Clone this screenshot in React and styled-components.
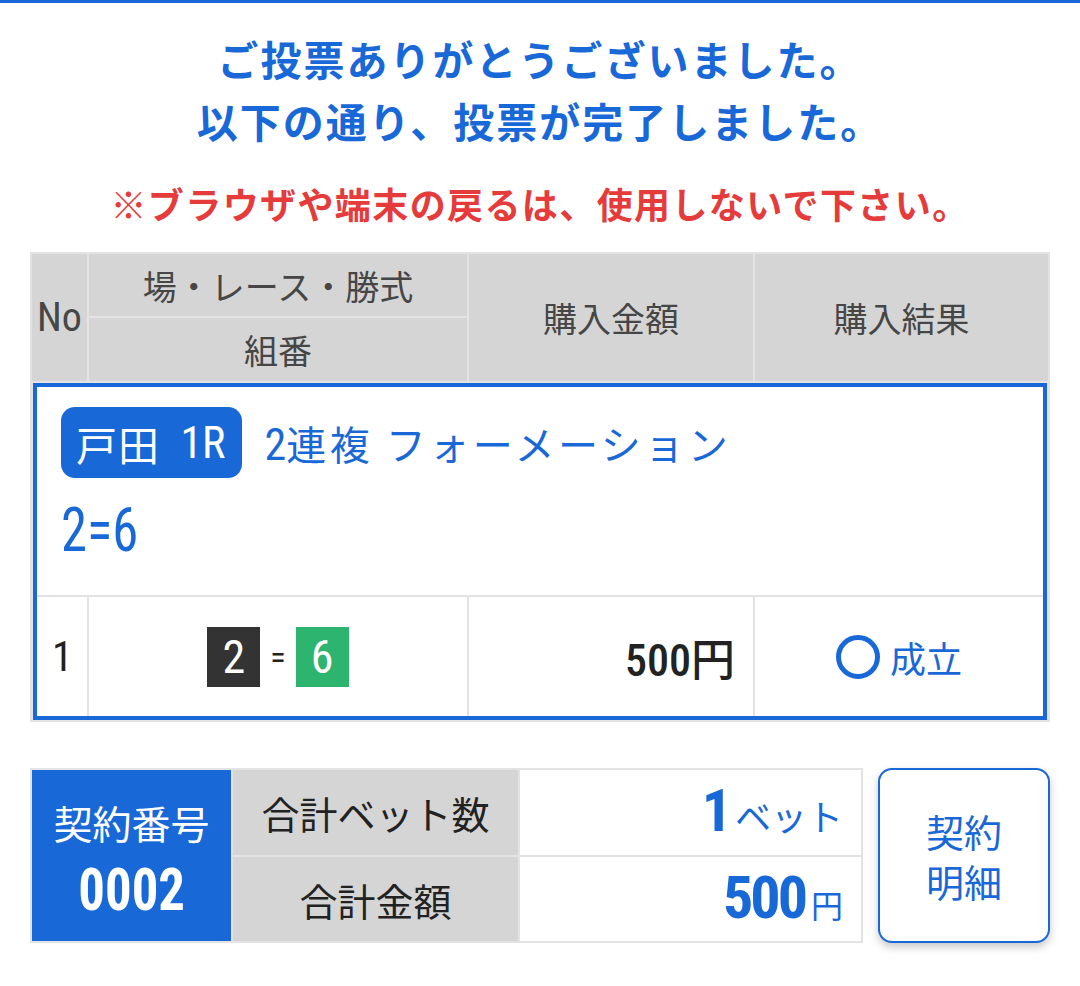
import React from "react";
import styled, { createGlobalStyle } from "styled-components";

const BLUE = "#1968d8";
const RED = "#e53b3b";
const GRID = "#e3e3e3";
const HEAD = "#d5d5d5";
const JP = `"Noto Sans CJK JP", "Noto Sans", sans-serif`;
const NUM = `"Roboto Condensed", "Roboto", "Noto Sans CJK JP", sans-serif`;

const Global = createGlobalStyle`
  html, body { margin: 0; padding: 0; background: #fff; }
  body { font-family: ${JP}; color: #222; }
  * { box-sizing: border-box; }
`;

const TopBar = styled.div`
  height: 3px;
  background: ${BLUE};
`;

const Page = styled.div`
  padding: 24px 30px 40px;
`;

const Title = styled.h1`
  margin: 0;
  text-align: center;
  color: ${BLUE};
  font-size: 41px;
  line-height: 62px;
  font-weight: 700;
  letter-spacing: 2px;
`;

const Warning = styled.p`
  margin: 27px 0 0;
  text-align: center;
  color: ${RED};
  font-size: 36px;
  line-height: 50px;
  font-weight: 700;
  letter-spacing: 1.4px;
`;

const Table = styled.div`
  margin-top: 24px;
  background: ${GRID};
  padding: 2px;
  display: flex;
  flex-direction: column;
  gap: 2px;
`;

const HeadGrid = styled.div`
  display: grid;
  grid-template-columns: 55px 378px 284px 1fr;
  grid-template-rows: 62px 63px;
  gap: 2px;
`;

const HeadCell = styled.div`
  background: ${HEAD};
  color: #464646;
  font-size: ${(p) => (p.$num ? 40 : 34)}px;
  display: flex;
  align-items: center;
  justify-content: center;
  grid-column: ${(p) => p.$col};
  grid-row: ${(p) => p.$row};
  font-family: ${(p) => (p.$num ? NUM : JP)};
  font-stretch: condensed;
`;

const BetBox = styled.div`
  border: 4px solid ${BLUE};
  margin: 0 1px;
  background: ${GRID};
  display: flex;
  flex-direction: column;
  gap: 2px;
`;

const Info = styled.div`
  background: #fff;
  height: 208px;
  padding: 20px 24px 0;
  color: ${BLUE};
`;

const InfoLine = styled.div`
  display: flex;
  align-items: center;
  gap: 22px;
  font-size: 40px;
  letter-spacing: 3.5px;
`;

const Badge = styled.span`
  display: inline-flex;
  align-items: center;
  height: 71px;
  padding: 0 17px 0 15px;
  background: ${BLUE};
  color: #fff;
  border-radius: 14px;
  letter-spacing: 1px;
  font-size: 41px;
`;

const Num = styled.span`
  font-family: ${NUM};
  font-stretch: condensed;
  letter-spacing: 0;
  font-weight: ${(p) => p.$w || 400};
  font-size: ${(p) => (p.$size ? `${p.$size}px` : "inherit")};
`;

const Combo = styled.div`
  margin-top: 16px;
  font-family: ${NUM};
  font-stretch: condensed;
  font-size: 62px;
  line-height: 72px;
  transform: scaleX(0.85);
  transform-origin: left center;
`;

const Row = styled.div`
  display: grid;
  grid-template-columns: 50px 378px 284px 1fr;
  height: 119px;
  gap: 2px;
`;

const Cell = styled.div`
  background: #fff;
  display: flex;
  align-items: center;
  justify-content: ${(p) => p.$align || "center"};
  padding: ${(p) => p.$pad || "0"};
`;

const RowNo = styled.span`
  font-family: ${NUM};
  font-stretch: condensed;
  font-size: 42px;
  color: #222;
`;

const Frame = styled.span`
  width: 53px;
  height: 60px;
  display: inline-flex;
  align-items: center;
  justify-content: center;
  background: ${(p) => p.$bg};
  color: #fff;
  font-family: ${NUM};
  font-stretch: condensed;
  font-size: 46px;
`;

const Eq = styled.span`
  font-family: ${NUM};
  font-size: 32px;
  color: #222;
  margin: 0 10px;
`;

const Amount = styled.span`
  font-size: 44px;
  color: #222;
  font-weight: 500;
`;

const Result = styled.div`
  display: flex;
  align-items: center;
  gap: 10px;
  color: ${BLUE};
  font-size: 36px;
`;

const Ring = styled.span`
  width: 44px;
  height: 44px;
  border: 5px solid ${BLUE};
  border-radius: 50%;
`;

const Summary = styled.div`
  margin-top: 46px;
  display: flex;
  gap: 15px;
  align-items: stretch;
`;

const SumGrid = styled.div`
  flex: 1;
  background: ${GRID};
  padding: 2px;
  display: grid;
  grid-template-columns: 199px 285px 1fr;
  grid-template-rows: 85px 84px;
  gap: 2px;
`;

const Contract = styled.div`
  grid-row: 1 / span 2;
  background: ${BLUE};
  color: #fff;
  display: flex;
  flex-direction: column;
  align-items: center;
  justify-content: center;
  font-size: 39px;
  line-height: 68px;
`;

const ContractNo = styled.span`
  font-family: ${NUM};
  font-stretch: condensed;
  font-weight: 700;
  font-size: 60px;
  display: inline-block;
  transform: scaleX(0.88);
`;

const Label = styled.div`
  background: ${HEAD};
  display: flex;
  align-items: center;
  justify-content: center;
  font-size: 38px;
  color: #222;
`;

const Value = styled.div`
  background: #fff;
  display: flex;
  align-items: baseline;
  justify-content: flex-end;
  padding: 0 18px 0 0;
  color: ${BLUE};
  font-size: ${(p) => p.$unit}px;
  line-height: 82px;
`;

const BigNum = styled.span`
  font-family: ${NUM};
  font-stretch: condensed;
  font-weight: 700;
  font-size: 60px;
  letter-spacing: -3px;
  margin-right: 6px;
`;

const DetailButton = styled.button`
  width: 172px;
  border: 2px solid ${BLUE};
  border-radius: 14px;
  background: #fff;
  color: ${BLUE};
  font-family: ${JP};
  font-size: 38px;
  line-height: 50px;
  box-shadow: 0 4px 8px rgba(0, 0, 0, 0.22);
  padding: 0;
  cursor: pointer;
`;

export default function App() {
  return (
    <>
      <Global />
      <TopBar />
      <Page>
        <Title>
          ご投票ありがとうございました。
          <br />
          以下の通り、投票が完了しました。
        </Title>
        <Warning>※ブラウザや端末の戻るは、使用しないで下さい。</Warning>

        <Table>
          <HeadGrid>
            <HeadCell $col="1" $row="1 / span 2" $num>No</HeadCell>
            <HeadCell $col="2" $row="1">場・レース・勝式</HeadCell>
            <HeadCell $col="2" $row="2">組番</HeadCell>
            <HeadCell $col="3" $row="1 / span 2">購入金額</HeadCell>
            <HeadCell $col="4" $row="1 / span 2">購入結果</HeadCell>
          </HeadGrid>

          <BetBox>
            <Info>
              <InfoLine>
                <Badge>
                  戸田&nbsp;&nbsp;<Num $size={44}>1R</Num>
                </Badge>
                <span>
                  <Num $size={44}>2</Num>連複&nbsp;フォーメーション
                </span>
              </InfoLine>
              <Combo>2=6</Combo>
            </Info>
            <Row>
              <Cell $align="flex-start" $pad="0 0 0 15px">
                <RowNo>1</RowNo>
              </Cell>
              <Cell>
                <Frame $bg="#333333">2</Frame>
                <Eq>=</Eq>
                <Frame $bg="#2db46f">6</Frame>
              </Cell>
              <Cell $align="flex-end" $pad="0 18px 0 0">
                <Amount>
                  <Num $w={500}>500</Num>円
                </Amount>
              </Cell>
              <Cell>
                <Result>
                  <Ring />
                  成立
                </Result>
              </Cell>
            </Row>
          </BetBox>
        </Table>

        <Summary>
          <SumGrid>
            <Contract>
              <span>契約番号</span>
              <ContractNo>0002</ContractNo>
            </Contract>
            <Label>合計ベット数</Label>
            <Value $unit={36}>
              <BigNum>1</BigNum>ベット
            </Value>
            <Label>合計金額</Label>
            <Value $unit={32}>
              <BigNum>500</BigNum>円
            </Value>
          </SumGrid>
          <DetailButton>
            契約
            <br />
            明細
          </DetailButton>
        </Summary>
      </Page>
    </>
  );
}
